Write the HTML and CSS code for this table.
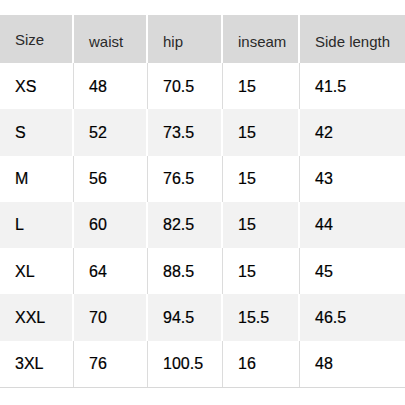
FILE: index.html
```html
<!DOCTYPE html>
<html>
<head>
<meta charset="utf-8">
<link rel="stylesheet" href="styles.css">
</head>
<body>
<div class="table">
  <div class="row head">
    <div class="cell first">Size</div><div class="cell">waist</div><div class="cell">hip</div><div class="cell">inseam</div><div class="cell">Side length</div>
  </div>
  <div class="row">
    <div class="cell first">XS</div><div class="cell">48</div><div class="cell">70.5</div><div class="cell">15</div><div class="cell">41.5</div>
  </div>
  <div class="row alt">
    <div class="cell first">S</div><div class="cell">52</div><div class="cell">73.5</div><div class="cell">15</div><div class="cell">42</div>
  </div>
  <div class="row">
    <div class="cell first">M</div><div class="cell">56</div><div class="cell">76.5</div><div class="cell">15</div><div class="cell">43</div>
  </div>
  <div class="row alt">
    <div class="cell first">L</div><div class="cell">60</div><div class="cell">82.5</div><div class="cell">15</div><div class="cell">44</div>
  </div>
  <div class="row">
    <div class="cell first">XL</div><div class="cell">64</div><div class="cell">88.5</div><div class="cell">15</div><div class="cell">45</div>
  </div>
  <div class="row alt">
    <div class="cell first">XXL</div><div class="cell">70</div><div class="cell">94.5</div><div class="cell">15.5</div><div class="cell">46.5</div>
  </div>
  <div class="row">
    <div class="cell first">3XL</div><div class="cell">76</div><div class="cell">100.5</div><div class="cell">16</div><div class="cell">48</div>
  </div>
</div>
</body>
</html>
```
FILE: styles.css
```css
html, body {
  margin: 0;
  padding: 0;
  background: #fff;
}
body {
  font-family: "Liberation Sans", Arial, sans-serif;
  font-size: 16px;
  color: #000;
}
.table {
  margin-top: 15px;
  width: 405px;
  display: grid;
  grid-template-rows: 48px repeat(7, 1fr);
  height: 373px;
  border-bottom: 1px solid #d8d8d8;
  box-sizing: border-box;
}
.row {
  display: grid;
  grid-template-columns: 74px 74px 75px 77px 105px;
  background: #fff;
}
.cell {
  box-sizing: border-box;
  padding-left: 15px;
  padding-top: 1px;
  display: flex;
  align-items: center;
  border-right: 1px solid #dcdcdc;
  -webkit-text-stroke: 0.2px #000;
}
.cell:last-child {
  border-right: none;
}
.head {
  background: #d9d9d9;
  color: #2a2a2a;
  font-size: 15px;
}
.head .cell {
  border-right: 2px solid #fff;
  padding-top: 4px;
  -webkit-text-stroke: 0;
}
.head .cell.first {
  padding-top: 1px;
}
.head .cell:last-child {
  border-right: none;
}
.alt {
  background: #f2f2f2;
}
.alt .cell {
  border-right: 2px solid #fff;
}
.alt .cell:last-child {
  border-right: none;
}
```
